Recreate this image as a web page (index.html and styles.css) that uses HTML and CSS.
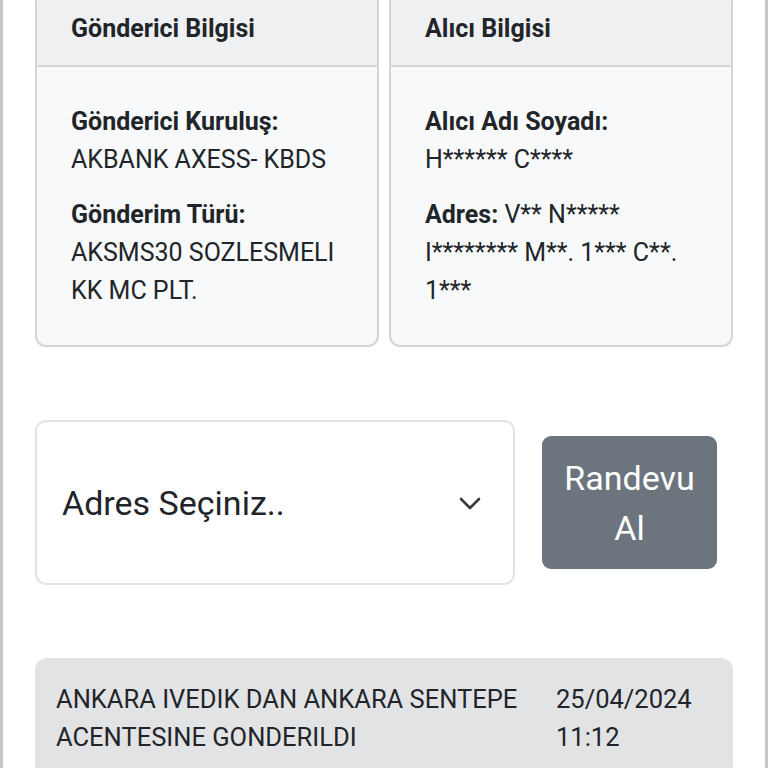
FILE: index.html
```html
<!DOCTYPE html>
<html lang="tr">
<head>
<meta charset="utf-8">
<title>Gönderi Takip</title>
<link rel="stylesheet" href="styles.css">
</head>
<body>
<div class="frame">
  <div class="cards">
    <section class="card">
      <div class="card-header">Gönderici Bilgisi</div>
      <div class="card-body">
        <p><strong>Gönderici Kuruluş:</strong><br>AKBANK AXESS- KBDS</p>
        <p><strong>Gönderim Türü:</strong><br>AKSMS30 SOZLESMELI KK MC PLT.</p>
      </div>
    </section>
    <section class="card">
      <div class="card-header">Alıcı Bilgisi</div>
      <div class="card-body">
        <p><strong>Alıcı Adı Soyadı:</strong><br>H****** C****</p>
        <p><strong>Adres:</strong> V** N***** I******** M**. 1*** C**. 1***</p>
      </div>
    </section>
  </div>

  <div class="action-row">
    <div class="select">
      <span class="select-text">Adres Seçiniz..</span>
      <svg class="chevron" width="22" height="13" viewBox="0 0 22 13"><polyline points="2,2 11,11 20,2" fill="none" stroke="#343a40" stroke-width="2.6" stroke-linecap="round" stroke-linejoin="round"/></svg>
    </div>
    <button class="btn">Randevu Al</button>
  </div>

  <div class="event">
    <div class="event-text">ANKARA IVEDIK DAN ANKARA SENTEPE ACENTESINE GONDERILDI</div>
    <div class="event-date">25/04/2024<br>11:12</div>
  </div>
</div>
</body>
</html>
```

FILE: styles.css
```css
html, body {
  margin: 0;
  padding: 0;
  background: #ffffff;
}
body {
  font-family: Roboto, "Liberation Sans", Arial, sans-serif;
  color: #212529;
  overflow: hidden;
}
.frame {
  box-sizing: border-box;
  width: 768px;
  min-height: 800px;
  border-left: 3px solid #c6c6c6;
  border-right: 3px solid #c6c6c6;
  padding: 0 32px 0 32px;
}
.cards {
  display: flex;
  gap: 10px;
  margin-top: -9px;
}
.card {
  flex: 1;
  border: 2px solid #d2d4d7;
  border-radius: 11px;
  background: #f8f9fa;
  overflow: hidden;
}
.card-header {
  background: #eff0f2;
  border-bottom: 2px solid #d2d4d7;
  padding: 17px 34px;
  font-size: 25px;
  line-height: 38px;
  font-weight: 700;
}
.card-body {
  padding: 36px 34px 18px;
  font-size: 25px;
  line-height: 38px;
}
.card-body p {
  margin: 0 0 17px;
}
.card-body strong {
  font-weight: 700;
}
.action-row {
  display: flex;
  align-items: center;
  margin-top: 73px;
}
.select {
  box-sizing: border-box;
  width: 480px;
  height: 165px;
  border: 2px solid #e1e3e6;
  border-radius: 11px;
  background: #fff;
  display: flex;
  align-items: center;
  justify-content: space-between;
  padding: 0 32px 0 25px;
}
.select-text {
  font-size: 34px;
  color: #212529;
}
.chevron {
  display: block;
  margin-top: 2px;
}
.btn {
  box-sizing: border-box;
  margin-left: 27px;
  width: 175px;
  height: 133px;
  border: none;
  border-radius: 9px;
  background: #6c757d;
  color: #ffffff;
  font-family: Roboto, "Liberation Sans", Arial, sans-serif;
  font-size: 34px;
  line-height: 50px;
  padding: 0 16px;
  text-align: center;
}
.event {
  margin-top: 73px;
  background: #e2e3e5;
  border-radius: 12px;
  padding: 22px 21px;
  display: grid;
  grid-template-columns: 484px 1fr;
  column-gap: 16px;
  font-size: 25.5px;
  line-height: 38px;
  color: #212529;
}
```
